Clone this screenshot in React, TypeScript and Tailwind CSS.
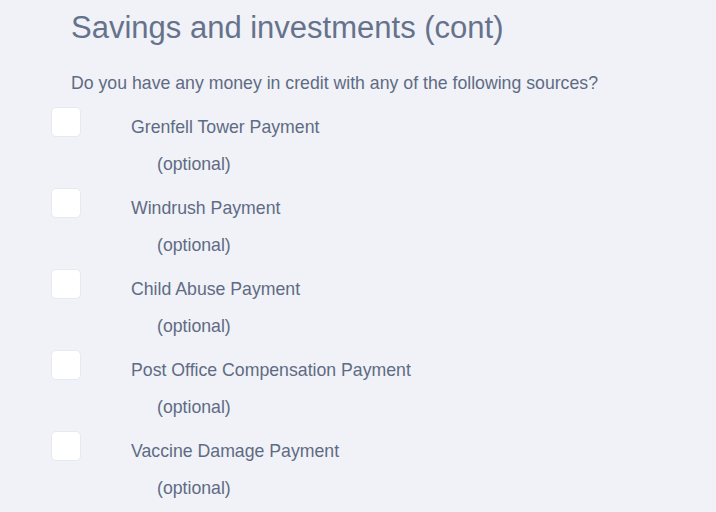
const sources = [
  "Grenfell Tower Payment",
  "Windrush Payment",
  "Child Abuse Payment",
  "Post Office Compensation Payment",
  "Vaccine Damage Payment",
];

export default function App() {
  return (
    <div
      className="min-h-screen bg-[#f0f2f7] pl-[51px] pt-[10px] text-[#5f6b84]"
      style={{ fontFamily: '"Liberation Sans", Arial, sans-serif' }}
    >
      {/* Heading */}
      <h1 className="ml-5 text-[31px] leading-[36px] text-[#66728c]">Savings and investments (cont)</h1>

      <p className="ml-5 mt-[25px] text-[17.7px] leading-6">
        Do you have any money in credit with any of the following sources?
      </p>

      {/* Checkbox list */}
      <div className="mt-[12px] flex flex-col">
        {sources.map((s) => (
          <label key={s} className="flex h-[81px] items-start gap-[50px]">
            <span className="block h-[30px] w-[30px] shrink-0 rounded-[5px] border border-[#e6e9ef] bg-white" />
            <span className="flex flex-col pt-[8px]">
              <span className="text-[17.7px] leading-6">{s}</span>
              <span className="ml-[26px] mt-[13px] text-[17.7px] leading-6">(optional)</span>
            </span>
          </label>
        ))}
      </div>
    </div>
  );
}
